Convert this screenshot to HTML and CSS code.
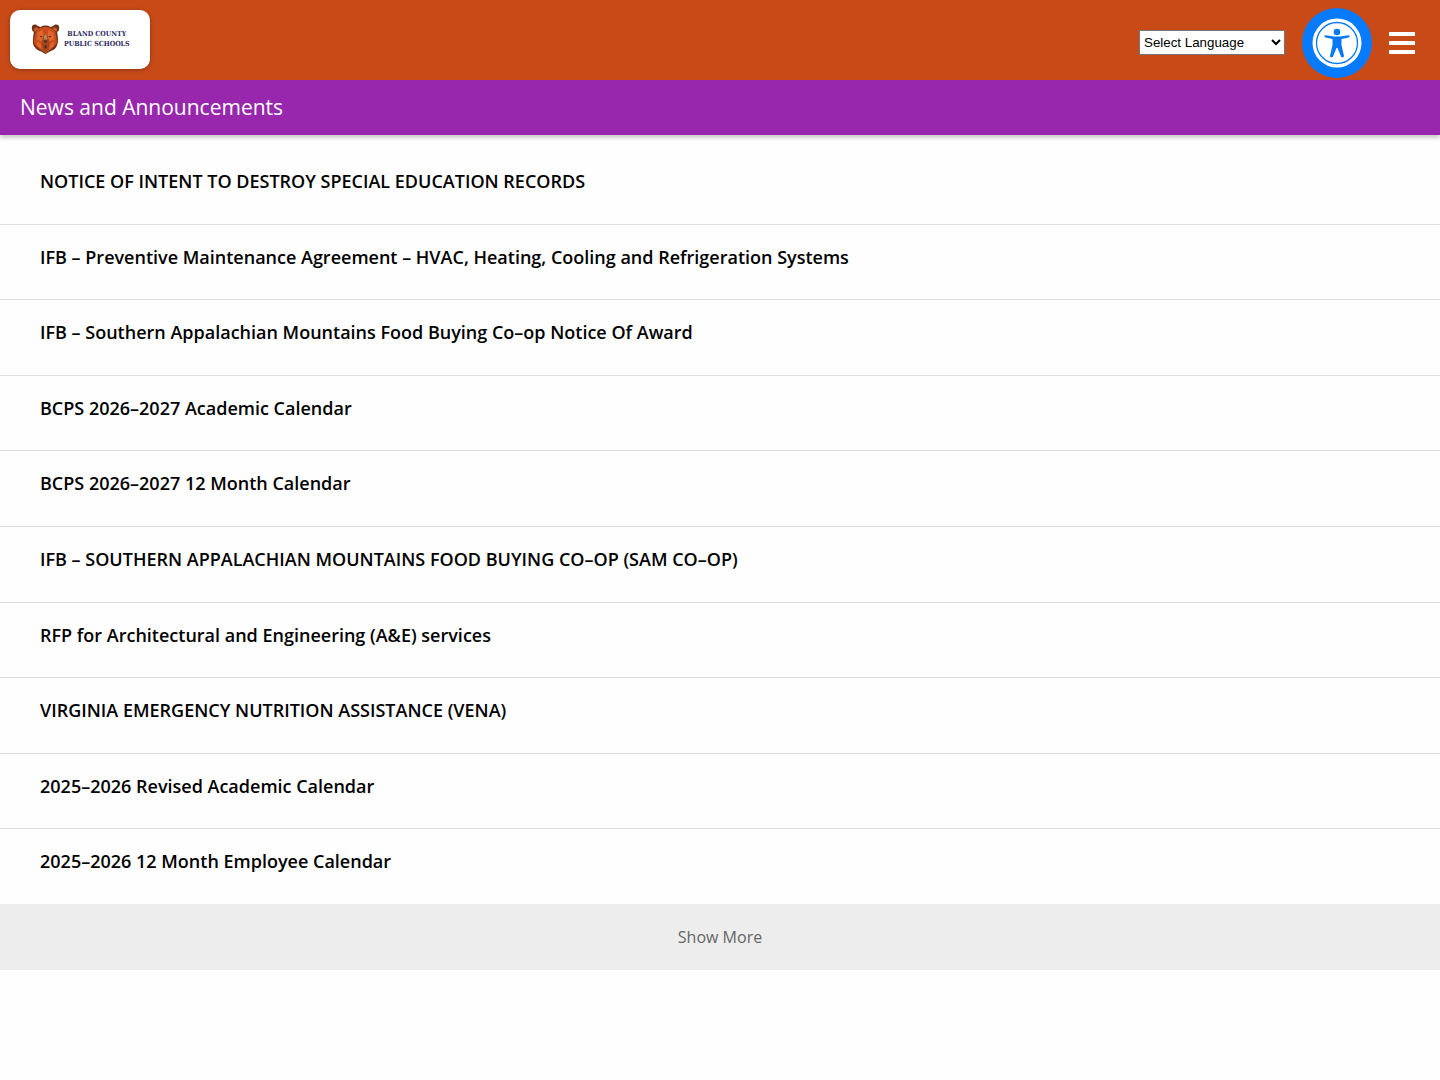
FILE: index.html
```html
<!DOCTYPE html>
<html lang="en">
<head>
    <meta charset="UTF-8">
    <meta name="viewport" content="width=device-width, initial-scale=1.0">
    <title>News and Announcements - Bland County Public Schools</title>
    <link rel="stylesheet" href="styles.css">
</head>
<body>
    <header class="top-bar">
        <a class="logo" href="#">
            <svg class="logo-bear" viewBox="0 0 30 32" aria-hidden="true">
                <path fill="#6b3219" d="M1 5C0 1 4-1 7 2l3 1c3-2 7-2 10 0l3-1c3-3 7-1 6 3 0 2-1 3-2 3l1 8c0 4-1 6-2 8-2 3-4 3-6 4l-5 3-5-3c-3-1-5-2-6-4-2-2-2-4-2-8l1-8C2 8 1 7 1 5z"/>
                <path fill="#c94d1c" d="M5 8c2-3 5-5 10-5s8 2 10 5l2 9c0 4-3 6-5 8l-7 5-7-5c-3-2-5-4-5-8z"/>
                <path fill="#cf5b2a" d="M3 6c0-2 2-3 4-2l1 1-4 3zM27 6c0-2-2-3-4-2l-1 1 4 3z"/>
                <path fill="#e0672b" d="M7 9l5-3 1 7-2 5-5-2zM23 9l-5-3-1 7 2 5 5-2zM6 18l4 2 1 6-4-3zM24 18l-4 2-1 6 4-3z"/>
                <path fill="#a3451d" d="M13 12h4l2 7-1 7-3 3-3-3-1-7z"/>
                <path fill="#b08a60" d="M14 11h2l1 5h-4z"/>
                <path fill="#4a2a20" d="M9 12l3 1-1 1-2-1zM21 12l-3 1 1 1 2-1zM13 17h4l-1 2h-2zM14 22h2v3h-2z"/>
            </svg>
            <span class="logo-text">BLAND COUNTY<br>PUBLIC SCHOOLS</span>
        </a>

        <div class="tools">
            <select class="language" aria-label="Select Language">
                <option>Select Language</option>
                <option>Spanish</option>
                <option>French</option>
            </select>
            <button class="accessibility" type="button" aria-label="Accessibility options">
                <svg viewBox="0 0 70 70" aria-hidden="true">
                    <circle cx="35" cy="35" r="24.5" fill="#fff"/>
                    <circle cx="35" cy="35" r="20.5" fill="none" stroke="#0678f5" stroke-width="1.3"/>
                    <circle cx="35" cy="24" r="3.3" fill="#0678f5"/>
                    <path fill="#0678f5" d="M23.500 27.200l8.500 1.300h6l8.500-1.300c1.500 0 1.500 2 0 2.300l-7 1.500v6l2.500 11c0 1.500-2.200 2-3 .5L35.500 40h-1l-3.500 8.500c-.8 1.500-3 1-3-.5l2.500-11v-6l-7-1.500c-1.500-.3-1.500-2.300 0-2.300z"/>
                </svg>
            </button>
            <button class="menu" type="button" aria-label="Menu">
                <svg viewBox="0 0 26 22" aria-hidden="true">
                    <path fill="#fff" d="M0 0h26v4H0zM0 9h26v4H0zM0 18h26v4H0z"/>
                </svg>
            </button>
        </div>
    </header>

    <h1 class="page-title">News and Announcements</h1>

    <main>
        <ul class="news-list">
            <li><a href="#">NOTICE OF INTENT TO DESTROY SPECIAL EDUCATION RECORDS</a></li>
            <li><a href="#">IFB – Preventive Maintenance Agreement – HVAC, Heating, Cooling and Refrigeration Systems</a></li>
            <li><a href="#">IFB – Southern Appalachian Mountains Food Buying Co–op Notice Of Award</a></li>
            <li><a href="#">BCPS 2026–2027 Academic Calendar</a></li>
            <li><a href="#">BCPS 2026–2027 12 Month Calendar</a></li>
            <li><a href="#">IFB – SOUTHERN APPALACHIAN MOUNTAINS FOOD BUYING CO–OP (SAM CO–OP)</a></li>
            <li><a href="#">RFP for Architectural and Engineering (A&amp;E) services</a></li>
            <li><a href="#">VIRGINIA EMERGENCY NUTRITION ASSISTANCE (VENA)</a></li>
            <li><a href="#">2025–2026 Revised Academic Calendar</a></li>
            <li><a href="#">2025–2026 12 Month Employee Calendar</a></li>
        </ul>
        <button class="show-more" type="button">Show More</button>
    </main>
</body>
</html>
```
FILE: styles.css
```css
* {
    box-sizing: border-box;
}

body {
    margin: 0;
    font-family: "Open Sans", sans-serif;
    background-color: #fefefe;
    color: #000;
}

button {
    border: none;
    padding: 0;
    cursor: pointer;
}

.top-bar {
    display: flex;
    justify-content: space-between;
    align-items: center;
    height: 80px;
    padding: 0 25px 0 10px;
    background-color: #c84a17;
}

.logo {
    display: flex;
    align-items: center;
    gap: 3px;
    margin-bottom: 2px;
    padding: 14px 20px;
    border-radius: 10px;
    background-color: #fff;
    box-shadow: 0 1px 4px rgba(0, 0, 0, 0.3);
    color: #2c2a68;
    text-decoration: none;
}

.logo-bear {
    width: 31px;
    height: 31px;
}

.logo-text {
    font-family: "DejaVu Serif Condensed", "DejaVu Serif", serif;
    font-size: 7px;
    font-weight: bold;
    line-height: 10px;
    text-align: center;
    white-space: nowrap;
}

.tools {
    display: flex;
    align-items: center;
    gap: 17px;
    padding-top: 6px;
}

.language {
    width: 146px;
    height: 25px;
    margin-bottom: 2px;
    border: 1px solid #767676;
    background-color: #fff;
    color: #000;
}

.accessibility {
    width: 70px;
    height: 70px;
    border-radius: 50%;
    background-color: #067bff;
}

.accessibility svg,
.menu svg {
    display: block;
    width: 100%;
}

.menu {
    width: 26px;
    background: none;
}

.page-title {
    margin: 0;
    padding: 12px 20px 13px;
    background-color: #9927ae;
    box-shadow: 0 3px 4px rgba(0, 0, 0, 0.2);
    color: #fff;
    font-size: 21px;
    font-weight: 400;
    line-height: 30px;
}

.news-list {
    margin: 0;
    padding: 14px 0 0;
    list-style: none;
}

.news-list li {
    border-bottom: 1px solid #ddd;
}

.news-list a {
    display: block;
    padding: 17px 40px 27px;
    color: #000;
    font-size: 18px;
    font-weight: 600;
    line-height: 1.7;
    text-decoration: none;
}

.news-list li:last-child {
    border-bottom-color: #ededed;
}

.show-more {
    display: block;
    width: 100%;
    padding: 20px;
    background-color: #ededed;
    color: #666;
    font-family: inherit;
    font-size: 16px;
    line-height: 25px;
}
```
